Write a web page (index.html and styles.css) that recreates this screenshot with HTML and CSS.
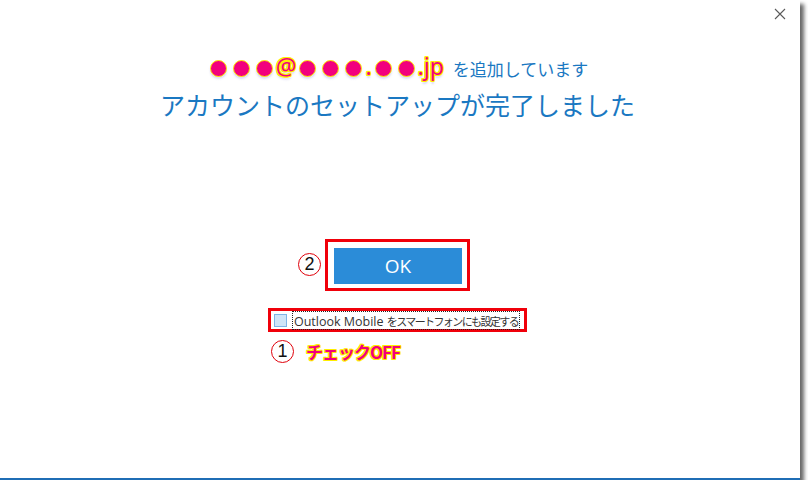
FILE: index.html
```html
<!doctype html>
<html>
    <head>
        <meta charset="utf-8">
        <link rel="stylesheet" href="styles.css">
    </head>
    <body>
        <div class="window">
            <div class="titlebar">
                <svg class="closeBtn" width="12" height="12" viewBox="0 0 12 12">
                    <path d="M1 1 L11 11 M11 1 L1 11" stroke="#5a5a5a" stroke-width="1.1" fill="none"/>
                </svg>
            </div>
            <div class="content">
                <div class="email">
                    <span class="dot"></span><span class="dot"></span><span class="dot"></span><span class="mark">@</span><span class="dot"></span><span class="dot"></span><span class="dot"></span><span class="mark">.</span><span class="dot"></span><span class="dot"></span><span class="mark">.jp</span>
                    <span class="adding">を追加しています</span>
                </div>
                <div class="heading">アカウントのセットアップが完了しました</div>

                <div class="okFrame">
                    <span class="num numOk">2</span>
                    <button class="okBtn">OK</button>
                </div>

                <div class="checkGroup">
                    <div class="checkFrame">
                        <span class="checkbox"></span>
                        <span class="checkLabel"><span class="latin">Outlook Mobile </span><span class="jp">をスマートフォンにも設定する</span></span>
                    </div>
                    <div class="note">
                        <span class="num">1</span>
                        <span class="noteText">チェックOFF</span>
                    </div>
                </div>
            </div>
        </div>
    </body>
</html>
```

FILE: styles.css
```css
body
{
    margin: 0;
    background: #ffffff;
    font-family: "Noto Sans CJK JP", sans-serif;
}
.window
{
    width: 800px;
    height: 480px;
    box-sizing: border-box;
    background: #ffffff;
    border-bottom: 2px solid #1f6db5;
    box-shadow: 4px 4px 4px rgba(0, 0, 0, 0.6);
    display: flex;
    flex-direction: column;
}
.titlebar
{
    height: 30px;
    display: flex;
    justify-content: flex-end;
    align-items: flex-start;
    padding: 8px 14px 0 0;
    box-sizing: border-box;
}
.content
{
    display: flex;
    flex-direction: column;
    align-items: center;
    padding-right: 5px;
}
.email
{
    margin-top: 26px;
    height: 24px;
    display: flex;
    align-items: center;
}
.dot
{
    width: 15px;
    height: 15px;
    margin: 0 3px;
    border-radius: 50%;
    background: #f2007d;
    border: 1px solid #ffee00;
    box-shadow: 0 2px 2px rgba(120, 120, 210, 0.25);
}
.mark
{
    font-family: "Noto Sans", sans-serif;
    font-size: 23px;
    line-height: 24px;
    color: #f2007d;
    margin-top: -4px;
    text-shadow: 1px 0 0 #ffee00, -1px 0 0 #ffee00, 0 1px 0 #ffee00, 0 -1px 0 #ffee00,
                 1px 1px 0 #ffee00, -1px -1px 0 #ffee00, 1px -1px 0 #ffee00, -1px 1px 0 #ffee00,
                 0 3px 2px rgba(120, 120, 210, 0.3);
}
.adding
{
    margin-left: 9px;
    font-size: 17px;
    color: #1a78c2;
}
.heading
{
    margin-top: 6px;
    height: 36px;
    line-height: 36px;
    font-size: 25px;
    color: #1a78c2;
}
.okFrame
{
    position: relative;
    margin-top: 117px;
    border: 3px solid #f0000a;
    padding: 6px 5px 4px 6px;
}
.okBtn
{
    display: block;
    width: 128px;
    height: 36px;
    border: none;
    background: #2b8cd8;
    color: #ffffff;
    font-family: "Open Sans", sans-serif;
    font-size: 19px;
}
.num
{
    width: 21px;
    height: 21px;
    border: 1.5px solid #e0000a;
    border-radius: 50%;
    display: inline-flex;
    align-items: center;
    justify-content: center;
    font-family: "Liberation Sans", sans-serif;
    font-size: 18px;
    color: #111111;
}
.numOk
{
    position: absolute;
    left: -30px;
    top: 11px;
}
.checkGroup
{
    margin-top: 17px;
    display: flex;
    flex-direction: column;
    align-items: flex-start;
}
.checkFrame
{
    border: 3px solid #f0000a;
    padding: 1px 4px 1px 3px;
    display: flex;
    align-items: center;
    height: 16px;
}
.checkbox
{
    width: 11px;
    height: 11px;
    background: #cfe5f8;
    border: 1px solid #7fb4e6;
    margin-right: 5px;
}
.checkLabel
{
    border: 1px dotted #222222;
    padding: 0 1px;
    line-height: 14px;
    color: #333333;
    white-space: nowrap;
}
.latin
{
    font-family: "Open Sans", sans-serif;
    font-size: 12.5px;
}
.jp
{
    font-size: 11px;
    letter-spacing: -1.6px;
}
.note
{
    margin: 7px 0 0 3px;
    display: flex;
    align-items: center;
}
.noteText
{
    margin-left: 12px;
    font-size: 17px;
    font-weight: bold;
    letter-spacing: -1px;
    color: #f2007d;
    text-shadow: 1px 0 0 #ffee00, -1px 0 0 #ffee00, 0 1px 0 #ffee00, 0 -1px 0 #ffee00,
                 1px 1px 0 #ffee00, -1px -1px 0 #ffee00, 1px -1px 0 #ffee00, -1px 1px 0 #ffee00;
}
```
